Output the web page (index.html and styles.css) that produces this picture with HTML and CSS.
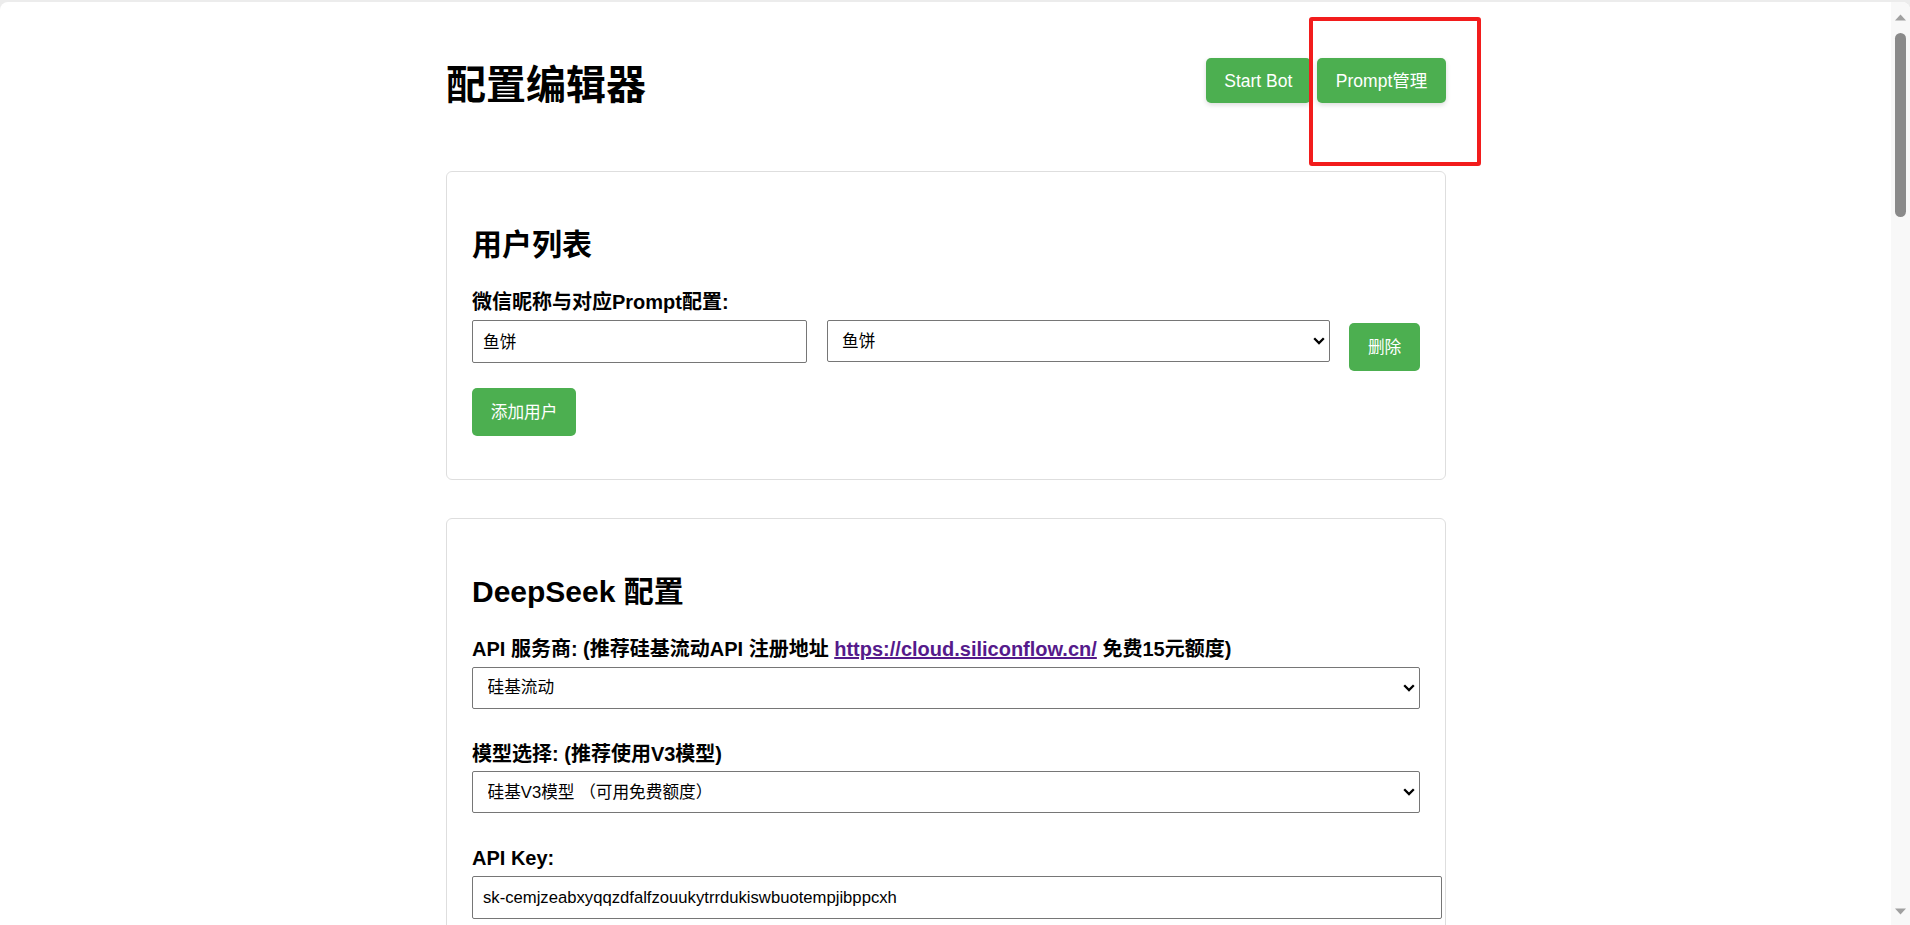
FILE: index.html
```html
<!DOCTYPE html>
<html lang="zh-CN">
<head>
<meta charset="utf-8">
<title>配置编辑器</title>
<link rel="stylesheet" href="styles.css">
</head>
<body>
<div class="window">
  <div class="viewport">
    <div class="container">
      <header class="header">
        <h1 class="title">配置编辑器</h1>
        <div class="header-actions">
          <button class="btn btn-top">Start Bot</button>
          <button class="btn btn-top">Prompt管理</button>
        </div>
      </header>

      <section class="card">
        <h2 class="card-title">用户列表</h2>
        <div class="users">
          <label class="label">微信昵称与对应Prompt配置:</label>
          <div class="user-row">
            <input class="input input-name" type="text" value="鱼饼">
            <div class="select-wrap select-prompt">
              <select class="select"><option>鱼饼</option></select>
              <svg class="chev" width="12" height="8" viewBox="0 0 12 8"><polyline points="1.2,1.2 6,6 10.8,1.2" fill="none" stroke="#000" stroke-width="2.3"/></svg>
            </div>
            <button class="btn btn-form">删除</button>
          </div>
          <button class="btn btn-form btn-add">添加用户</button>
        </div>
      </section>

      <section class="card">
        <h2 class="card-title">DeepSeek 配置</h2>
        <div class="group">
          <label class="label">API 服务商: (推荐硅基流动API 注册地址 <a class="link" href="#">https://cloud.siliconflow.cn/</a> 免费15元额度)</label>
          <div class="select-wrap">
            <select class="select"><option>硅基流动</option></select>
            <svg class="chev" width="12" height="8" viewBox="0 0 12 8"><polyline points="1.2,1.2 6,6 10.8,1.2" fill="none" stroke="#000" stroke-width="2.3"/></svg>
          </div>
        </div>
        <div class="group">
          <label class="label">模型选择: (推荐使用V3模型)</label>
          <div class="select-wrap">
            <select class="select"><option>硅基V3模型 （可用免费额度）</option></select>
            <svg class="chev" width="12" height="8" viewBox="0 0 12 8"><polyline points="1.2,1.2 6,6 10.8,1.2" fill="none" stroke="#000" stroke-width="2.3"/></svg>
          </div>
        </div>
        <div class="group">
          <label class="label">API Key:</label>
          <input class="input input-full" type="text" value="sk-cemjzeabxyqqzdfalfzouukytrrdukiswbuotempjibppcxh">
        </div>
      </section>
    </div>
  </div>

  <div class="scrollbar">
    <svg class="sb-arrow sb-up" width="11" height="7" viewBox="0 0 11 7"><polygon points="0,6.5 5.5,0.5 11,6.5" fill="#a0a0a0"/></svg>
    <div class="sb-thumb"></div>
    <div class="sb-space"></div>
    <svg class="sb-arrow sb-down" width="11" height="7" viewBox="0 0 11 7"><polygon points="0,0.5 5.5,6.5 11,0.5" fill="#a0a0a0"/></svg>
  </div>

  <div class="annotation"></div>
</div>
</body>
</html>
```

FILE: styles.css
```css
html, body {
  margin: 0;
  padding: 0;
  height: 925px;
  overflow: hidden;
  background: #ececec;
}

body {
  font-family: "Liberation Sans", "Noto Sans CJK SC", sans-serif;
  color: #000;
}

.window {
  position: relative;
  display: flex;
  margin-top: 2px;
  height: 923px;
  background: #ffffff;
  border-radius: 8px 8px 0 0;
  overflow: hidden;
}

.viewport {
  flex: 1;
  min-width: 0;
  padding-left: 1px;
  overflow: hidden;
}

.container {
  width: 1000px;
  margin: 0 auto;
}

/* header */
.header {
  display: flex;
  justify-content: space-between;
  align-items: flex-start;
  padding-top: 56px;
  margin-bottom: 62px;
}

.title {
  margin: 3px 0 0;
  font-size: 40px;
  line-height: 48px;
  font-weight: bold;
}

.header-actions {
  display: flex;
  gap: 6px;
}

.btn {
  font-family: "Liberation Sans", "Noto Sans CJK SC", sans-serif;
  background: #4caf50;
  color: #fff;
  border: none;
  border-radius: 5px;
  cursor: pointer;
}

.btn-top {
  font-size: 17.5px;
  line-height: 20px;
  padding: 12.5px 18.75px;
  box-shadow: 0 2px 5px rgba(0, 0, 0, 0.14);
}

.btn-form {
  font-size: 16.67px;
  line-height: 23px;
  padding: 12.5px 18.75px;
  flex: none;
}

/* cards */
.card {
  background: #fff;
  border: 1px solid #dedede;
  border-radius: 6px;
  padding: 25px 25px 25px;
  margin-bottom: 38px;
}

.card-title {
  margin: 30px 0 27px;
  font-size: 30px;
  line-height: 36px;
  font-weight: bold;
}

.label {
  display: block;
  font-size: 20px;
  line-height: 24px;
  font-weight: bold;
  margin-bottom: 5.5px;
}

.link {
  color: #551a8b;
  text-decoration: underline;
}

.users {
  margin-bottom: 18px;
}

.user-row {
  display: flex;
  align-items: center;
  gap: 19.5px;
  margin-bottom: 13px;
}

.input {
  font-family: "Liberation Sans", "Noto Sans CJK SC", sans-serif;
  font-size: 16.67px;
  line-height: 21px;
  padding: 10px;
  border: 1px solid #767676;
  border-radius: 2px;
  color: #000;
  background: #fff;
  margin: 0 0 12.5px;
  outline: none;
}

.input-name {
  flex: 0 0 335px;
  min-width: 0;
  box-sizing: border-box;
  height: 43px;
}

.input-full {
  display: block;
  width: 100%;
  box-sizing: content-box;
}

.select-wrap {
  position: relative;
  margin-bottom: 12.5px;
}

.select-prompt {
  flex: 1 1 0;
  min-width: 0;
}

.select {
  display: block;
  width: 100%;
  height: 42px;
  box-sizing: border-box;
  -webkit-appearance: none;
  appearance: none;
  font-family: "Liberation Sans", "Noto Sans CJK SC", sans-serif;
  font-size: 16.67px;
  color: #000;
  background: #fff;
  border: 1px solid #767676;
  border-radius: 2px;
  padding: 0 30px 0 14.5px;
  outline: none;
}

.chev {
  position: absolute;
  right: 5px;
  top: 50%;
  margin-top: -4px;
  pointer-events: none;
}

.group {
  margin-bottom: 33px;
}

/* scrollbar */
.scrollbar {
  width: 19px;
  flex: none;
  background: #f8f8f8;
  display: flex;
  flex-direction: column;
  align-items: center;
  padding: 12px 0 10px;
  box-sizing: border-box;
}

.sb-arrow {
  display: block;
  flex: none;
}

.sb-thumb {
  width: 11px;
  height: 184px;
  margin-top: 12px;
  border-radius: 6px;
  background: #8a8a8a;
  flex: none;
}

.sb-space {
  flex: 1;
}

/* annotation overlay */
.annotation {
  position: absolute;
  left: 1309px;
  top: 15px;
  width: 172px;
  height: 149px;
  box-sizing: border-box;
  border: 4px solid #f21c1c;
  border-radius: 3px;
  pointer-events: none;
}
```
